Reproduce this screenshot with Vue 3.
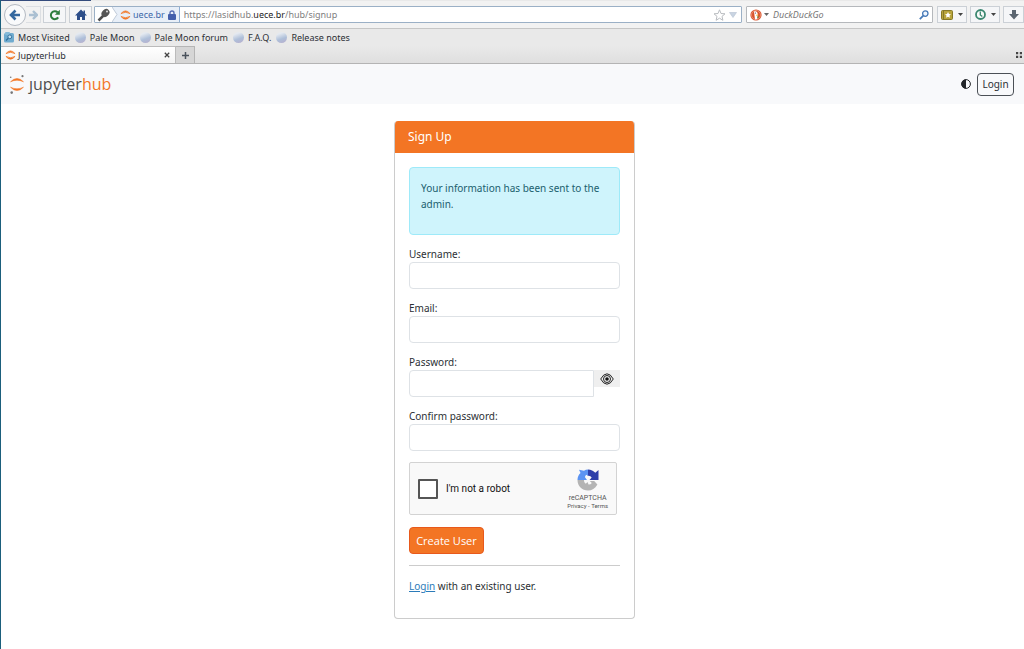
<script setup>
import { ref } from 'vue'

const bookmarks = ['Pale Moon', 'Pale Moon forum', 'F.A.Q.', 'Release notes']
const search = ref('')
const form = ref({ username: '', email: '', password: '', confirm: '' })
const showPassword = ref(false)
const human = ref(false)
</script>

<template>
  <div class="window">
    <header class="chrome">
      <div class="progress"></div>
      <div class="toolbar">
        <div class="nav-pair">
          <button class="back" aria-label="Back">
            <svg width="12" height="12" viewBox="0 0 12 12"><path d="M6.5 1.500 2 6l4.500 4.500M2.500 6H11" fill="none" stroke="#34689f" stroke-width="2.600" /></svg>
          </button>
          <button class="forward" aria-label="Forward">
            <svg width="9" height="10" viewBox="0 0 9 10"><path d="M4 1l4 4-4 4M7 5H0" fill="none" stroke="#abc0d2" stroke-width="2.400" /></svg>
          </button>
        </div>
        <button class="tool reload" aria-label="Reload">
          <svg width="12" height="12" viewBox="0 0 12 12"><path d="M9.200 8.400A4 4 0 1 1 8.600 3.200" fill="none" stroke="#2c7c3c" stroke-width="2" /><path d="M10.800.8v5H5.900z" fill="#2c7c3c" /></svg>
        </button>
        <button class="tool home" aria-label="Home">
          <svg width="12" height="12" viewBox="0 0 12 12"><path d="M6 .5 0 6.500h2V11h3V8h2v3h3V6.500h2L10 4.500V1.500H8.500V3z" fill="#2d4e8a" /></svg>
        </button>
        <div class="urlbar">
          <svg class="key" width="13" height="14" viewBox="0 0 13 14"><path d="M7.500 6.500 1.500 12.500" stroke="#4d4d4d" stroke-width="2.500" /><ellipse cx="8.500" cy="5" rx="4.400" ry="3.500" transform="rotate(-45 8.500 5)" fill="#555" /><circle cx="10" cy="3.500" r="1" fill="#ddd" /></svg>
          <div class="identity">
            <svg class="chevron" width="6" height="15" viewBox="0 0 6 15"><path d="M0 0l5 7.500L0 15z" fill="#fff" /><path d="M0 0l5 7.500L0 15" fill="none" stroke="#c0cbd8" /></svg>
            <svg width="11" height="12" viewBox="0 0 12 12"><path d="M1 4.500Q6-1.500 11 4.500 6 1.500 1 4.500M1 7.500Q6 13.500 11 7.500 6 10.500 1 7.500" fill="#f37726" stroke="#f37726" stroke-width=".8" /></svg>
            <span>uece.br</span>
            <svg class="lock" width="8" height="10" viewBox="0 0 8 10"><path d="M2 5V3a2 2 0 0 1 4 0v2" fill="none" stroke="#5970b5" stroke-width="1.400" /><rect y="4" width="8" height="6" rx="1" fill="#4560ac" /></svg>
          </div>
          <div class="address">https://lasidhub.<b>uece.br</b>/hub/signup</div>
          <svg width="13" height="12" viewBox="0 0 13 12"><path d="M6.500.8 8 4.500l4 .3-3 2.600.9 3.900-3.400-2.100-3.400 2.100.9-3.900-3-2.600 4-.3z" fill="#fff" stroke="#b9bcc0" /></svg>
          <svg class="drop" width="8" height="6" viewBox="0 0 8 6"><path d="M.5.5h7L4 5.500z" fill="#c9d4e2" stroke="#b5c1d1" stroke-width=".6" /></svg>
        </div>
        <div class="searchbar">
          <svg width="12" height="12" viewBox="0 0 12 12"><circle cx="6" cy="6" r="5.600" fill="#d9532c" /><circle cx="6" cy="6" r="4.500" fill="none" stroke="#f0a48b" stroke-width=".7" /><path d="M4 2.500c2-1 4 .5 3.700 3L7.300 10 5 10.400z" fill="#fff" /><path d="M6 5.800h3L6.500 7z" fill="#f5b82e" /><path d="M7 7.500l2 .3-1.500 1.500z" fill="#58a550" /><circle cx="5.500" cy="4" r=".6" fill="#345" /></svg>
          <svg class="caret" width="5" height="3" viewBox="0 0 5 3"><path d="M0 0h5L2.500 3z" fill="#666" /></svg>
          <input v-model="search" type="text" placeholder="DuckDuckGo" aria-label="Search" />
          <svg width="10" height="10" viewBox="0 0 10 10"><circle cx="6.300" cy="3.600" r="2.700" fill="#eff6ff" stroke="#4679b7" stroke-width="1.300" /><path d="M4.300 5.700.8 9.200" stroke="#4679b7" stroke-width="1.800" /></svg>
        </div>
        <button class="tool menu" aria-label="Bookmarks">
          <svg width="12" height="10" viewBox="0 0 12 10"><rect x=".5" y=".5" width="11" height="9" rx="1" fill="#b7a43b" stroke="#857827" /><path d="M2.500 1v8" stroke="#857827" /><path d="m7 2 1 2 2 .2-1.500 1.400.4 2.100L7 6.700 5.100 7.700l.4-2.100L4 4.200 6 4z" fill="#fff" /></svg>
          <svg width="5" height="3" viewBox="0 0 5 3"><path d="M0 0h5L2.500 3z" fill="#444" /></svg>
        </button>
        <button class="tool menu" aria-label="History">
          <svg width="11" height="11" viewBox="0 0 11 11"><circle cx="5.500" cy="5.500" r="4.500" fill="#f7fbf9" stroke="#3c8871" stroke-width="1.800" /><path d="M5.300 2.500V6l2 1.500" fill="none" stroke="#3c8871" stroke-width="1.300" /></svg>
          <svg width="5" height="3" viewBox="0 0 5 3"><path d="M0 0h5L2.500 3z" fill="#444" /></svg>
        </button>
        <button class="tool download" aria-label="Downloads">
          <svg width="10" height="10" viewBox="0 0 10 10"><path d="M3 0h4v4h3L5 9.500 0 4h3z" fill="#5b6570" /></svg>
        </button>
      </div>

      <nav class="bookmarks" aria-label="Bookmarks">
        <a href="#" class="bookmark">
          <svg width="10" height="11" viewBox="0 0 10 11"><rect y="1" width="10" height="9.500" rx="1.500" fill="#6fabcf" /><rect x="1" width="5" height="3" rx="1" fill="#86bad8" /><circle cx="5.800" cy="4.800" r="1.900" fill="#c5e1f1" stroke="#2f6c98" stroke-width=".9" /><path d="M4.300 6.300 2 8.500" stroke="#2f6c98" stroke-width="1.200" /></svg>
          Most Visited
        </a>
        <a v-for="name in bookmarks" :key="name" href="#" class="bookmark">
          <span class="globe"></span>{{ name }}
        </a>
      </nav>

      <div class="tabs">
        <div class="tab">
          <svg width="11" height="12" viewBox="0 0 12 12"><path d="M1 4.500Q6-1.500 11 4.500 6 1.500 1 4.500M1 7.500Q6 13.500 11 7.500 6 10.500 1 7.500" fill="#f37726" stroke="#f37726" stroke-width=".8" /></svg>
          <span>JupyterHub</span>
          <button aria-label="Close tab"><svg width="6" height="6" viewBox="0 0 6 6"><path d="m.8.8 4.400 4.400M5.200.8.800 5.200" stroke="#444" stroke-width="1.300" /></svg></button>
        </div>
        <button class="new-tab" aria-label="New tab"><svg width="7" height="7" viewBox="0 0 7 7"><path d="M3.500 0v7M0 3.500h7" stroke="#4a525c" stroke-width="1.500" /></svg></button>
        <svg class="grid" width="6" height="6" viewBox="0 0 6 6"><path d="M0 0h2.200v2.200H0zM3.800 0H6v2.200H3.800zM0 3.800h2.200V6H0zM3.800 3.800H6V6H3.800z" fill="#444" /></svg>
      </div>
    </header>

    <nav class="hub-nav">
      <a href="#" class="logo">
        <svg width="16" height="20" viewBox="0 0 16 20"><path d="M1.500 7.800Q8 1 14.500 7.800 8 4.700 1.500 7.800M1.500 13.200Q8 20 14.500 13.200 8 16.300 1.500 13.200" fill="#f37726" stroke="#f37726" stroke-width=".5" /><circle cx="13.500" cy="2.200" r="1.100" fill="#767677" /><circle cx="1.700" cy="3.200" r=".8" fill="#767677" /><circle cx="2.700" cy="18.600" r="1.300" fill="#767677" /></svg>
        <span>ȷupyter<em>hub</em></span>
      </a>
      <button class="theme" aria-label="Toggle dark mode"><svg width="10" height="10" viewBox="0 0 10 10"><circle cx="5" cy="5" r="4.400" fill="none" stroke="#222529" /><path d="M5 .5a4.500 4.500 0 0 0 0 9z" fill="#222529" /></svg></button>
      <button class="login">Login</button>
    </nav>

    <main>
      <form class="card" @submit.prevent>
        <h1>Sign Up</h1>
        <div class="body">
          <p class="alert" role="alert">Your information has been sent to the admin.</p>
          <label for="username">Username:</label>
          <input id="username" v-model="form.username" class="field" type="text" />
          <label for="email">Email:</label>
          <input id="email" v-model="form.email" class="field" type="email" />
          <label for="password">Password:</label>
          <div class="group">
            <input id="password" v-model="form.password" class="field" :type="showPassword ? 'text' : 'password'" />
            <button type="button" class="eye" aria-label="Show password" @click="showPassword = !showPassword">
              <svg width="14" height="12" viewBox="0 0 14 12"><path d="M.7 6Q3.500.8 7 .8T13.300 6Q10.500 11.200 7 11.200T.7 6z" fill="none" stroke="#222" /><circle cx="7" cy="6" r="3.500" fill="none" stroke="#222" /><circle cx="7" cy="6" r="1.800" fill="#111" /></svg>
            </button>
          </div>
          <label for="confirm">Confirm password:</label>
          <input id="confirm" v-model="form.confirm" class="field" type="password" />

          <div class="captcha">
            <input id="human" v-model="human" type="checkbox" />
            <label for="human">I'm not a robot</label>
            <div class="brand">
              <svg width="22" height="22" viewBox="0 0 22 22">
                <path d="M11 .5v6.500L9.300 5.800Q7.800 7 8 8.200L10 11H.5C.5 8 1.700 5.500 3.500 4L2 .8 7 1.700Q8.800.5 11 .5z" fill="#5b93f2" />
                <path d="M11 .5c3 0 5.500 1.300 7.300 3.300L21.500 1v10h-9l2.200-2.500Q13.500 6.500 11 6.800z" fill="#2e3fa9" />
                <path d="M.5 11H7c0 1.700.6 3 1.800 3.800L10.500 13l1 2.500q2 .2 3.300-1.500l-2-2h4.400l3.200 3.500C18 19.500 15 21.500 11 21.500 5 21.500.5 17 .5 11z" fill="#b4b4b4" />
              </svg>
              <span>reCAPTCHA</span>
              <small><a href="#">Privacy</a> - <a href="#">Terms</a></small>
            </div>
          </div>

          <button type="submit" class="create">Create User</button>
          <hr />
          <p class="existing"><a href="#">Login</a> with an existing user.</p>
        </div>
      </form>
    </main>
  </div>
</template>

<style>
body { margin: 0; background: #fff; }
</style>

<style scoped>
* { box-sizing: border-box; }
.window {
  min-height: 100vh;
  border-left: 1px solid #1b5f7c;
  font-family: "Noto Sans", "Open Sans", sans-serif;
  font-size: 10px;
  color: #2c3035;
}
button { padding: 0; border: 0; background: none; font: inherit; color: inherit; }
svg { display: block; flex: none; }
a { color: inherit; text-decoration: none; }

.chrome { background: #e9e9e9; font-family: "Noto Sans", "Open Sans", sans-serif; font-size: 9px; }
.progress { height: 1px; width: 90px; background: #344b7c; }
.toolbar {
  display: flex; align-items: center; height: 28px; padding-left: 3px; overflow: hidden;
  background: #f2f2f2; border-bottom: 1px solid #c6c6c6;
}
.nav-pair { display: flex; align-items: center; margin-right: 2px; }
.back { display: grid; place-items: center; width: 22px; height: 22px; border: 1px solid #b4bac3; border-radius: 50%; background: #f9fafb; }
.forward { display: grid; place-items: center; width: 15px; height: 17px; border: 1px solid #dcdfe3; border-left: 0; }
.tool {
  display: flex; align-items: center; justify-content: center; gap: 5px; flex: none;
  width: 23px; height: 17px; margin-right: 3px; border: 1px solid #cbd0d6; background: #f5f6f8;
}
.home { margin-right: 2px; }
.urlbar {
  display: flex; align-items: center; flex: 1; height: 17px; margin-right: 4px; padding-right: 4px;
  border: 1px solid #9bb0c6; border-radius: 1px; background: #fff;
}
.key { margin: 0 2px; }
.identity {
  display: flex; align-items: center; height: 15px; padding-right: 3px;
  border-right: 1px solid #8faed4; background: #e8eff8; color: #3c67a8;
}
.chevron { margin-right: 2px; }
.identity span { margin: 0 3px 0 2px; }
.address { flex: 1; padding-left: 4px; color: #808080; white-space: nowrap; }
.address b { color: #222; font-weight: 400; }
.drop { margin-left: 3px; }
.searchbar {
  display: flex; align-items: center; flex: 0 1 187px; min-width: 0; height: 17px; margin-right: 4px; padding: 0 3px;
  border: 1px solid #b5b8bc; border-radius: 1px; background: #fff;
}
.caret { margin: 0 4px 0 2px; }
.searchbar input {
  flex: 1; min-width: 0; padding: 0; border: 0; outline: 0; background: none;
  font: italic 9px "Noto Sans", sans-serif; color: #333;
}
.searchbar input::placeholder { color: #777; opacity: 1; }
.menu { width: 30px; }
.download { width: 21px; margin-right: 0; }

.bookmarks { display: flex; align-items: center; gap: 5px; height: 17px; padding-left: 3px; }
.bookmark { display: flex; align-items: center; gap: 4px; white-space: nowrap; }
.globe { width: 11px; height: 11px; border-radius: 50%; background: linear-gradient(160deg, #e4e9f0 20%, #aebfd9 60%, #b8aecd); }
.tabs { display: flex; align-items: center; height: 18px; border-bottom: 1px solid #b4b4b4; background: linear-gradient(#e9e9e9, #dfdfdf); }
.tab {
  display: flex; align-items: center; gap: 2px; width: 175px; height: 17px; padding: 0 5px 0 4px;
  border: 1px solid #bbb; border-width: 1px 1px 0 0; background: linear-gradient(#fff, #f4f4f4);
}
.tab span { flex: 1; }
.new-tab { display: grid; place-items: center; width: 19px; height: 17px; border: 1px solid #b5b5b5; border-width: 1px 1px 0 0; background: #d6d6d6; }
.grid { margin: 0 2px 0 auto; }

.hub-nav { display: flex; align-items: center; height: 40px; padding: 0 10px 0 8px; background: #f8f9fb; }
.logo { display: flex; align-items: center; gap: 4px; margin-right: auto; font: 16px/20px "Open Sans", sans-serif; color: #4e4e4e; }
.logo em { font-style: normal; color: #f37726; }
.theme { margin-right: 6px; }
.login { width: 37px; height: 23px; border: 1px solid #4b5056; border-radius: 4px; }

main { padding: 17px 0 20px 4px; }
.card { width: 241px; margin: 0 auto; border: 1px solid #ccc; border-top: 0; border-radius: 4px; background: #fff; overflow: hidden; }
h1 { margin: 0 -1px; padding: 0 14px; font-size: 12px; font-weight: 400; line-height: 32px; color: #fff; background: #f37524; }
.body { padding: 14px 14px 24px; }
.alert {
  height: 68px; margin: 0 0 11px; padding: 12px 11px; border: 1px solid #9eeaf9; border-radius: 4px;
  background: #cff4fc; color: #1b606e; line-height: 16px;
}
.body > label { display: block; line-height: 16px; }
.field {
  display: block; width: 100%; height: 27px; margin-bottom: 11px; padding: 4px 8px;
  border: 1px solid #dee2e6; border-radius: 4px; background: #fff; font: inherit; outline: 0;
}
.group { display: flex; align-items: flex-start; }
.group .field { flex: 1; min-width: 0; border-radius: 4px 0 0 4px; }
.eye { display: grid; place-items: center; width: 26px; height: 17px; background: #efefef; }
.captcha {
  display: flex; align-items: center; height: 53px; margin: 0 3px 12px 0; padding: 0 8px;
  border: 1px solid #d3d3d3; border-radius: 2px; background: #f9f9f9; font-family: Roboto, sans-serif;
}
.captcha input {
  appearance: none; width: 20px; height: 20px; margin: 0 8px 0 0; border: 2px solid #555; border-radius: 1px; background: #fff;
}
.captcha input:checked { background: #4caf50; }
.captcha label { flex: 1; color: #111; }
.brand { display: flex; flex-direction: column; align-items: center; color: #555; font-size: 7px; line-height: 8px; padding-top: 2px; }
.brand span { margin-top: 3px; }
.brand small { font-size: 6px; }
.create { display: block; width: 75px; height: 27px; border: 1px solid #e8591b; border-radius: 4px; background: #f37524; color: #fff; font: 11px "Open Sans", sans-serif; }
hr { margin: 11px 0 12px; border: 0; border-top: 1px solid #ccc; }
.existing { margin: 0; line-height: 16px; }
.existing a { color: #2b7bb9; text-decoration: underline; }
</style>
